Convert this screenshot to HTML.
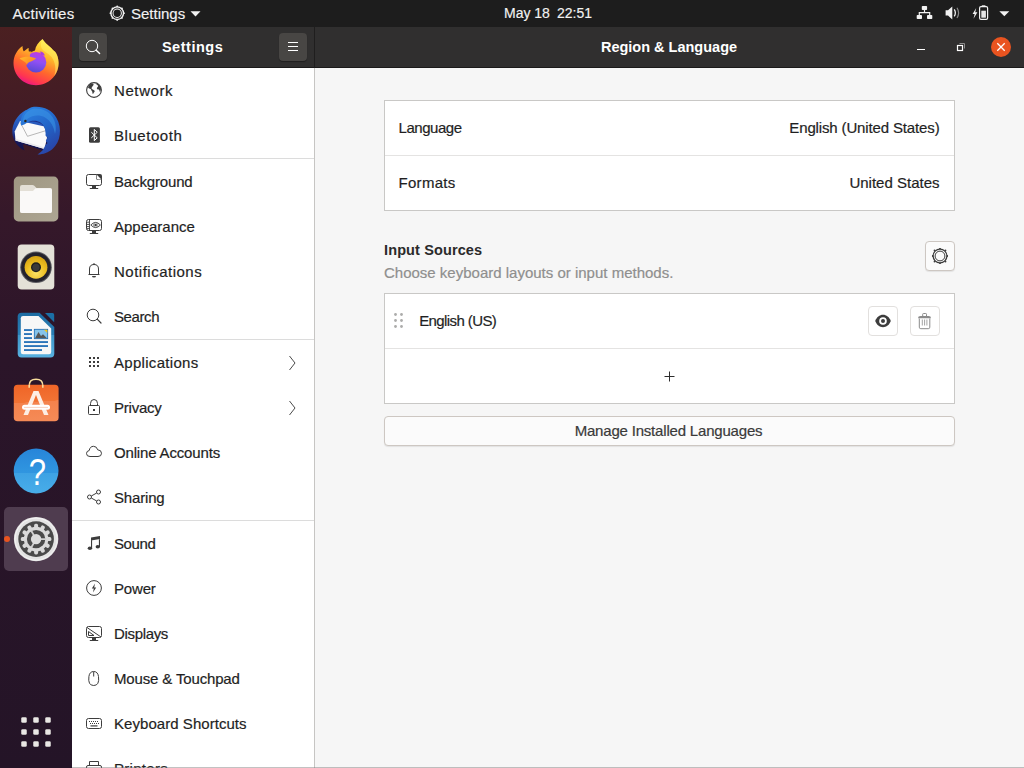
<!DOCTYPE html>
<html lang="en">
<head>
<meta charset="utf-8">
<title>Settings — Region &amp; Language</title>
<style>
*{box-sizing:border-box;margin:0;padding:0}
html,body{width:1024px;height:768px;overflow:hidden;background:#2c1424;font-family:"Liberation Sans",sans-serif;color:#2d2d2d}
.abs{position:absolute}
#topbar{position:absolute;left:0;top:0;width:1024px;height:27px;background:#1d1d1d;color:#f2f2f2;font-size:15px}
#topbar span{position:absolute;top:0;-webkit-text-stroke:0.15px;line-height:27px;white-space:nowrap}
#dock{position:absolute;left:0;top:27px;width:72px;height:741px;background:linear-gradient(180deg,#4b2021 0px,#431c25 80px,#35182a 190px,#2b1529 330px,#241427 741px)}
#hdrL{position:absolute;left:72px;top:27px;width:242px;height:41px;background:#302f2f;border-bottom:1px solid #1b1a1a}
#hdrR{position:absolute;left:314px;top:27px;width:710px;height:41px;background:#302f2f;border-bottom:1px solid #1b1a1a;border-left:1px solid #1f1e1e}
.htitle{position:absolute;top:0;line-height:40px;color:#fff;font-weight:bold;font-size:14.5px;white-space:nowrap;text-align:center}
.hbtn{position:absolute;top:6px;width:28px;height:28px;background:#484644;border-radius:4px;box-shadow:0 1px 1px rgba(0,0,0,.35)}
#side{position:absolute;left:72px;top:68px;width:242px;height:700px;background:#fff;overflow:hidden}
#sideborder{position:absolute;left:314px;top:68px;width:1px;height:700px;background:#c6c5c3}
#main{position:absolute;left:315px;top:68px;width:709px;height:700px;background:#f6f6f6}
.row{position:absolute;left:0;width:242px;height:45px}
.row .lbl{position:absolute;left:42px;-webkit-text-stroke:0.2px;top:0;line-height:45px;font-size:15px;color:#1f1f1f;white-space:nowrap}
.row svg.ic{position:absolute;left:14px;top:14px;width:16px;height:16px;overflow:visible}
.row svg.chev{position:absolute;left:214px;top:13.500px;width:12px;height:18px}
.sep{position:absolute;left:0;width:242px;height:1px;background:#dcdcdc}
.card{position:absolute;background:#fff;border:1px solid #c9c8c6}
.card .line{position:absolute;left:0;right:0;height:1px;background:#e4e3e2}
.t{position:absolute;-webkit-text-stroke:0.2px;white-space:nowrap;font-size:15px;color:#1f1f1f;line-height:20px}
.btn{position:absolute;background:#fbfbfb;border:1px solid #cdc7c2;border-radius:4px;box-shadow:0 1px 1px rgba(0,0,0,.08)}
</style>
</head>
<body>
<div id="topbar">
  <span style="left:12.5px;letter-spacing:0.28px">Activities</span>
  <span style="left:131px">Settings</span>
  <svg class="abs" style="left:108.700px;top:4.700px" width="16.400" height="16.400" viewBox="0 0 18 18"><circle cx="9" cy="9" r="4.600" fill="none" stroke="#f2f2f2" stroke-width="1.100"/><circle cx="9" cy="9" r="6.900" fill="none" stroke="#f2f2f2" stroke-width="1.500"/><g fill="#f2f2f2"><circle cx="9" cy="1.600" r="1"/><circle cx="9" cy="16.400" r="1"/><circle cx="1.600" cy="9" r="1"/><circle cx="16.400" cy="9" r="1"/><circle cx="3.800" cy="3.800" r="1"/><circle cx="14.200" cy="3.800" r="1"/><circle cx="3.800" cy="14.200" r="1"/><circle cx="14.200" cy="14.200" r="1"/></g></svg>
  <svg class="abs" style="left:190px;top:11px" width="11" height="6" viewBox="0 0 11 6"><path d="M0.500 0.300 H10.500 L5.500 5.500 Z" fill="#f2f2f2"/></svg>
  <svg class="abs" style="left:916px;top:5px" width="17" height="15" viewBox="0 0 17 15"><g fill="#f2f2f2"><rect x="5.800" y="0.900" width="5.300" height="4.100" rx="0.800"/><rect x="0.700" y="10" width="5.300" height="4.100" rx="0.800"/><rect x="11" y="10" width="5.300" height="4.100" rx="0.800"/><path d="M7.900 5 H9.100 V7 H14.300 V10 H13.100 V8.200 H3.900 V10 H2.700 V7 H7.900 Z"/></g></svg>
  <svg class="abs" style="left:945px;top:6px" width="16" height="14" viewBox="0 0 16 14"><path d="M0.600 4.200 H3 L7.300 0.400 V13.400 L3 9.600 H0.600 Z" fill="#f2f2f2"/><path d="M9.300 3.400 Q11.400 6.900 9.300 10.400" fill="none" stroke="#f2f2f2" stroke-width="1.300"/><path d="M12 1.800 Q15.200 6.900 12 12" fill="none" stroke="#8a8a8a" stroke-width="1.200"/></svg>
  <svg class="abs" style="left:972px;top:5px" width="17" height="15" viewBox="0 0 17 15"><path d="M4.200 2.900 L0.600 8.900 H2.700 L1.500 13.800 L5.400 7.300 H3.200 Z" fill="#f2f2f2"/><rect x="7.600" y="1.700" width="8" height="12.600" rx="1.400" fill="none" stroke="#f2f2f2" stroke-width="1.200"/><rect x="9.800" y="0.300" width="3.600" height="1.400" fill="#f2f2f2"/><rect x="9.300" y="5.700" width="4.600" height="7" fill="#e6e6e6"/></svg>
  <svg class="abs" style="left:999px;top:11px" width="11" height="6" viewBox="0 0 11 6"><path d="M0.300 0.200 H10.300 L5.300 5.300 Z" fill="#f2f2f2"/></svg>
  <span style="left:504px;font-size:14px">May 18</span><span style="left:557px;font-size:14px">22:51</span>
</div>
<div id="dock">
  <!-- Firefox -->
  <svg class="abs" style="left:4px;top:3px" width="64" height="64" viewBox="0 0 64 64">
    <defs>
      <linearGradient id="ffb" gradientUnits="userSpaceOnUse" x1="43.3" y1="11.3" x2="23" y2="55.2"><stop offset="0" stop-color="#fff04a"/><stop offset="0.3" stop-color="#ffb82a"/><stop offset="0.6" stop-color="#ff6a2c"/><stop offset="0.85" stop-color="#ff3650"/><stop offset="1" stop-color="#e9128c"/></linearGradient>
      <linearGradient id="ffg" x1="0.6" y1="0" x2="0.35" y2="1"><stop offset="0" stop-color="#c03be0"/><stop offset="0.45" stop-color="#9050f4"/><stop offset="1" stop-color="#5648d2"/></linearGradient>
      <linearGradient id="ffh" x1="0" y1="0" x2="1" y2="0.4"><stop offset="0" stop-color="#ffbd2e"/><stop offset="1" stop-color="#ff8a1e"/></linearGradient>
    </defs>
    <path d="M38.5 9 C41 13.500 46 16 49 20 C52.500 22 54.600 27.500 54.600 33 C54.600 45.500 44.500 55.200 32 55.200 C19.500 55.200 9.500 45.500 9.500 33 C9.500 26 13 20 18.500 16 C18.500 18 19 20 19.700 21.500 C21.500 20 23 18.500 24.700 18 C24.500 20 24.700 22 25.500 23.500 C27 22 29 21 31 20.500 C31.500 16 34.500 12 38.500 9 Z" fill="url(#ffb)"/>
    <path d="M38.500 9 C41 13.500 46 16 49 20 C52.500 22 54.600 27.500 54.600 33 C54.600 38 53 42.500 50 46.500 C52.500 40 51.500 32 47.500 27 C44.500 23.500 39.500 21.500 37.500 18 C36.300 15 37 11.500 38.500 9 Z" fill="#fff36a" opacity="0.500"/>
    <circle cx="32" cy="32.3" r="10.3" fill="url(#ffg)"/>
    <path d="M35.500 21.600 C38 21.400 40.200 23 41 25.800 C39.600 24.800 38.200 24.600 37 25 C37.300 23.700 36.700 22.500 35.500 21.600 Z" fill="#a83de2"/>
    <path d="M19 21.500 L27.500 21.500 C26 23.500 25.500 25.500 26 27.500 L24 30 L23 35.500 L19 31 Z" fill="url(#ffb)"/>
    <path d="M15.500 28.500 C20 26.200 27 26 32.200 28.600 C29.500 31 25.500 31.500 22.800 34 C21 31.500 18 30 15.500 28.500 Z" fill="url(#ffh)"/>
  </svg>
  <!-- Thunderbird -->
  <svg class="abs" style="left:4px;top:71px" width="64" height="64" viewBox="0 0 64 64">
    <defs>
      <linearGradient id="tbb" x1="0.2" y1="0" x2="0.8" y2="1"><stop offset="0" stop-color="#2b7fe0"/><stop offset="0.5" stop-color="#2265c8"/><stop offset="1" stop-color="#2a3fa2"/></linearGradient>
      <linearGradient id="tbl" x1="0" y1="0" x2="0" y2="1"><stop offset="0" stop-color="#2f74d6"/><stop offset="0.45" stop-color="#2450b4"/><stop offset="0.72" stop-color="#17195f"/><stop offset="1" stop-color="#121248"/></linearGradient>
    </defs>
    <path d="M22 12 C13 17 8 25.500 8.300 34.500 C8.600 42 13 48.500 20.500 52.500 C19.500 50 19 48 19.500 46 L40 53 L45 40 L40 20 Z" fill="url(#tbl)"/>
    <path d="M16 23 L40.500 28.500 L43 40 L40.500 51 L11.500 42.400 L10.700 33.500 Z" fill="#fafafa"/>
    <path d="M11.500 42.400 L40.500 51 L41 49.500 L11.700 40.800 Z" fill="#e9e9ec"/>
    <path d="M16.300 24.500 L23.500 38.300 L41.300 32.800" fill="none" stroke="#8a8a8a" stroke-width="0.600"/>
    <path d="M23 24.500 C28 22.500 34 23.500 37.500 26 C39.500 27.500 40.500 29 41 31 L41.500 27 L36 21 L26 21 Z" fill="#1d2f86"/>
    <path d="M17 27.500 C15.600 19 20 12 27.500 9.300 C37 7.500 47.500 11 52.500 20 C58.500 30.500 56.500 44 48.500 51 C44.500 54.500 38.500 56.700 33.500 56.500 C37.500 54 40 51 41.200 47.500 L43.500 45 L41.800 43 L43.500 39.500 L41.500 37.500 C42.300 32 40.500 27.500 36.500 24.500 C32.500 22 27.500 22.500 24.500 24 C22 25.500 19.500 27 17 27.500 Z" fill="url(#tbb)"/>
    <path d="M19 24 C19 17 23 12.500 28.500 11 C36 9.500 44 12.500 48.500 19 C52 24.500 52.500 31 51 36 C50 29 47 23 41 19.500 C35.500 16.500 28.500 17 24 20.500 C22 22 20.500 23.500 19 24 Z" fill="#3c97e8" opacity="0.550"/>
    <circle cx="21.400" cy="23" r="1.2" fill="#2a2418"/>
  </svg>
  <!-- Files -->
  <svg class="abs" style="left:4px;top:139px" width="64" height="64" viewBox="0 0 64 64">
    <defs><linearGradient id="flb" x1="0" y1="0" x2="1" y2="1"><stop offset="0" stop-color="#9f9782"/><stop offset="1" stop-color="#ada693"/></linearGradient></defs>
    <rect x="9.800" y="10.600" width="44.500" height="44.800" rx="4.500" fill="url(#flb)"/>
    <path d="M16 21 Q16 19 18 19 H28.500 Q29.500 19 30.300 19.800 L32.500 22 H46 Q48 22 48 24 V45 Q48 47 46 47 H18 Q16 47 16 45 Z" fill="#e3dfd6"/>
    <path d="M16 25 H29 L31.500 22.200 H46 Q48 22.200 48 24.200 V45 Q48 47 46 47 H18 Q16 47 16 45 Z" fill="#faf9f8"/>
  </svg>
  <!-- Rhythmbox -->
  <svg class="abs" style="left:4px;top:207px" width="64" height="64" viewBox="0 0 64 64">
    <defs><radialGradient id="rby" cx="0.5" cy="0.75" r="0.7"><stop offset="0" stop-color="#fbe266"/><stop offset="0.6" stop-color="#ecbe22"/><stop offset="1" stop-color="#d9a614"/></radialGradient></defs>
    <rect x="13.700" y="10.600" width="36.600" height="44.800" rx="4" fill="#e4e1d8"/>
    <circle cx="32" cy="33.300" r="15.800" fill="#5c5b60"/>
    <circle cx="32" cy="33.300" r="14.800" fill="#24222c"/>
    <circle cx="32" cy="33.300" r="11.400" fill="url(#rby)"/>
    <circle cx="32" cy="33.300" r="5" fill="#1f1f1f"/>
    <circle cx="32" cy="33.300" r="3.600" fill="#3a3a3a"/>
  </svg>
  <!-- Writer -->
  <svg class="abs" style="left:4px;top:275px" width="64" height="64" viewBox="0 0 64 64">
    <defs><linearGradient id="wrb" x1="0" y1="0" x2="0" y2="1"><stop offset="0" stop-color="#1c6ca2"/><stop offset="0.49" stop-color="#2a7fb6"/><stop offset="0.5" stop-color="#3d96c9"/><stop offset="1" stop-color="#58b1e0"/></linearGradient></defs>
    <path d="M17.500 10.700 H35.500 L50.300 25 V51.500 Q50.300 55.400 46.500 55.400 H17.500 Q13.700 55.400 13.700 51.500 V14.500 Q13.700 10.700 17.500 10.700 Z" fill="url(#wrb)"/>
    <path d="M41 11 H48.500 Q50.200 11 50.200 12.700 V20.200 Z" fill="#1b6fa5"/>
    <path d="M19 14 H34.500 L47.200 26.500 V50 Q47.200 52.300 45 52.300 H19 Q16.800 52.300 16.800 50 V16.200 Q16.800 14 19 14 Z" fill="#f7f7f7"/>
    <g fill="#1667b2"><rect x="20" y="27.200" width="8" height="1.700"/><rect x="20" y="31.200" width="8" height="1.700"/><rect x="20" y="35.200" width="8" height="1.700"/><rect x="20" y="39.200" width="24" height="1.700"/><rect x="20" y="43.200" width="24" height="1.700"/><rect x="20" y="47.200" width="18" height="1.700"/></g>
    <rect x="30.300" y="27.300" width="13.400" height="9.400" fill="#86c3ea" stroke="#1667b2" stroke-width="0.8"/>
    <path d="M31 36.300 L34.500 30 L37 34 L39 32.300 L43 36.300 Z" fill="#555"/>
    <path d="M40 27.700 H43.300 V31 Z" fill="#f5c211"/>
  </svg>
  <!-- Software -->
  <svg class="abs" style="left:4px;top:343px" width="64" height="64" viewBox="0 0 64 64">
    <defs><linearGradient id="swb" x1="0" y1="0" x2="0.08" y2="1"><stop offset="0" stop-color="#ef6426"/><stop offset="0.5" stop-color="#f27334"/><stop offset="0.505" stop-color="#f4824c"/><stop offset="1" stop-color="#f58a56"/></linearGradient></defs>
    <path d="M25.200 17.500 V15.500 Q25.200 9.300 32 9.300 Q38.800 9.300 38.800 15.500 V17.500" fill="none" stroke="#f8dd9c" stroke-width="1.600"/>
    <rect x="9.800" y="14.800" width="44.800" height="36.500" rx="3.800" fill="url(#swb)"/>
    <path d="M25.200 17.700 V15 M38.800 17.700 V15" stroke="#f8dd9c" stroke-width="1.600"/>
    <path d="M29.500 21 H34.500 L44.500 45 H40 L32 25 L24 45 H19.500 Z" fill="#fdeee4"/>
    <rect x="18" y="34.800" width="28" height="5" rx="2.500" fill="#fff"/>
    <rect x="20" y="36.900" width="24" height="0.900" fill="#f9cdb8"/>
  </svg>
  <!-- Help -->
  <svg class="abs" style="left:4px;top:411px" width="64" height="64" viewBox="0 0 64 64">
    <defs><linearGradient id="hpb" x1="0" y1="0" x2="0" y2="1"><stop offset="0" stop-color="#2785d9"/><stop offset="0.54" stop-color="#3096e0"/><stop offset="0.545" stop-color="#3ea2e4"/><stop offset="1" stop-color="#48ade9"/></linearGradient></defs>
    <circle cx="32.100" cy="33" r="22.400" fill="url(#hpb)"/>
    <text x="0" y="46.800" transform="translate(33.400 0) scale(0.840 1)" font-family="Liberation Sans, sans-serif" font-size="37" fill="#fff" text-anchor="middle">?</text>
  </svg>
  <!-- Settings (active) -->
  <div class="abs" style="left:4px;top:480px;width:64px;height:64px;border-radius:5px;background:#4f3c4f"></div>
  <div class="abs" style="left:4px;top:509px;width:6px;height:6px;border-radius:3px;background:#e95420"></div>
  <svg class="abs" style="left:4px;top:480px" width="64" height="64" viewBox="0 0 64 64">
    <circle cx="32.100" cy="32.100" r="22.200" fill="#e3e3e3"/>
    <circle cx="32.100" cy="32.100" r="21" fill="none" stroke="#f4f4f4" stroke-width="1"/>
    <circle cx="32.100" cy="32.100" r="17.800" fill="#4a4a4a"/>
    <g transform="translate(32.100 32.100)" fill="#d9d9d9">
      <circle r="12.300"/>
      <rect x="-2" y="-15.300" width="4" height="5" rx="1.600" transform="rotate(0)"/><rect x="-2" y="-15.300" width="4" height="5" rx="1.600" transform="rotate(30)"/><rect x="-2" y="-15.300" width="4" height="5" rx="1.600" transform="rotate(60)"/><rect x="-2" y="-15.300" width="4" height="5" rx="1.600" transform="rotate(90)"/><rect x="-2" y="-15.300" width="4" height="5" rx="1.600" transform="rotate(120)"/><rect x="-2" y="-15.300" width="4" height="5" rx="1.600" transform="rotate(150)"/><rect x="-2" y="-15.300" width="4" height="5" rx="1.600" transform="rotate(180)"/><rect x="-2" y="-15.300" width="4" height="5" rx="1.600" transform="rotate(210)"/><rect x="-2" y="-15.300" width="4" height="5" rx="1.600" transform="rotate(240)"/><rect x="-2" y="-15.300" width="4" height="5" rx="1.600" transform="rotate(270)"/><rect x="-2" y="-15.300" width="4" height="5" rx="1.600" transform="rotate(300)"/><rect x="-2" y="-15.300" width="4" height="5" rx="1.600" transform="rotate(330)"/>
      <circle r="9.200" fill="#4a4a4a"/>
      <path d="M0 0 L10 0 M0 0 L-5 -8.660 M0 0 L-5 8.660" stroke="#d0d0d0" stroke-width="1.800"/>
      <circle r="5.200" fill="#dcdcdc"/>
    </g>
  </svg>
  <!-- App grid -->
  <svg class="abs" style="left:20px;top:689px" width="32" height="32" viewBox="0 0 32 32"><g fill="#e9e7e4"><rect x="1.250" y="1.250" width="5.500" height="5.500" rx="1.300"/><rect x="13.250" y="1.250" width="5.500" height="5.500" rx="1.300"/><rect x="25.250" y="1.250" width="5.500" height="5.500" rx="1.300"/><rect x="1.250" y="13.250" width="5.500" height="5.500" rx="1.300"/><rect x="13.250" y="13.250" width="5.500" height="5.500" rx="1.300"/><rect x="25.250" y="13.250" width="5.500" height="5.500" rx="1.300"/><rect x="1.250" y="25.250" width="5.500" height="5.500" rx="1.300"/><rect x="13.250" y="25.250" width="5.500" height="5.500" rx="1.300"/><rect x="25.250" y="25.250" width="5.500" height="5.500" rx="1.300"/></g></svg>
</div>
<div id="hdrL">
  <div class="hbtn" style="left:7px"><svg class="abs" style="left:6px;top:6px" width="16" height="16" viewBox="0 0 16 16"><circle cx="7" cy="7" r="5.700" fill="none" stroke="#fff" stroke-width="1"/><path d="M11.200 11.200 L14.600 14.600" stroke="#fff" stroke-width="1.400" stroke-linecap="round"/></svg></div>
  <div class="htitle" style="left:70.600px;width:100px;letter-spacing:0.52px">Settings</div>
  <div class="hbtn" style="left:207px"><div class="abs" style="left:9px;top:9px;width:10px;height:1px;background:#fff"></div><div class="abs" style="left:9px;top:13px;width:10px;height:1px;background:#fff"></div><div class="abs" style="left:9px;top:17px;width:10px;height:1px;background:#fff"></div></div>
</div>
<div id="hdrR">
  <div class="htitle" style="left:254px;width:200px">Region &amp; Language</div>
  <div class="abs" style="left:602px;top:22px;width:8px;height:1px;background:#fff"></div>
  <svg class="abs" style="left:641px;top:15px" width="10" height="10" viewBox="0 0 10 10"><path d="M3.500 1.500 H8.500 V6.500" fill="none" stroke="#8c8c8c" stroke-width="1"/><rect x="1.500" y="3.500" width="5" height="5" fill="none" stroke="#fff" stroke-width="1.200"/></svg>
  <div class="abs" style="left:676px;top:10px;width:20px;height:20px;border-radius:10px;background:#e95420"><svg class="abs" style="left:5px;top:5px" width="10" height="10" viewBox="0 0 10 10"><path d="M1.300 1.300 L8.700 8.700 M8.700 1.300 L1.300 8.700" stroke="#fff" stroke-width="1.300"/></svg></div>

</div>
<div id="side">
  <div class="row" style="top:0px"><svg class="ic" viewBox="0 0 16 16"><circle cx="8" cy="8" r="7.4" fill="none" stroke="#3d3d3d" stroke-width="1.1"/><path d="M5.2 1.6 C3.6 2.6 2.4 3.8 2 5.4 C2.6 6.4 3.6 6.6 4.6 7 C5.4 7.4 5.2 8.6 6 9.2 C6.6 9.8 6.2 11 6.8 12 C7.4 11.8 7.6 10.6 8.4 10 C9 9.4 8.6 8.6 8 8.2 C7 7.6 6.2 7.4 5.6 6.6 C5.2 6 6.2 5.4 6.4 4.6 C6.6 3.8 7.8 3.6 7.6 2.6 C7.4 1.8 6.2 1.4 5.2 1.6 Z M10.6 1.4 C10.2 2.2 10.8 3 11.6 3.2 C12.2 3.4 12.4 4.2 11.8 4.8 C11.2 5.4 10.6 6 11 6.8 C11.6 7.6 12.6 7.2 13.2 8 C13.6 8.6 13.4 9.6 14 10 C14.8 9 15.2 7 14.8 5.6 C14.2 3.6 12.6 2 10.6 1.4 Z" fill="#3d3d3d"/></svg><span class="lbl" style="letter-spacing:0.60px">Network</span></div>
  <div class="row" style="top:45px"><svg class="ic" viewBox="0 0 16 16"><rect x="3" y="0.200" width="10.900" height="15.600" rx="1.500" fill="#3d3d3d"/><path d="M5.300 5.200 L11.200 10.800 L8.300 13.700 V2.400 L11.200 5.300 L5.300 10.900" fill="none" stroke="#fff" stroke-width="1"/></svg><span class="lbl" style="letter-spacing:0.55px">Bluetooth</span></div>
  <div class="sep" style="top:90px"></div>
  <div class="row" style="top:91px"><svg class="ic" viewBox="0 0 16 16"><path d="M10.5 1.5 H2.5 Q0.5 1.5 0.5 3.5 V10.500 Q0.5 12.500 2.5 12.500 H13.5 Q15.5 12.500 15.5 10.500 V6.5" fill="none" stroke="#3d3d3d" stroke-width="1"/><path d="M10 1 H14 Q16 1 16 3 V7 H12 Q10 7 10 5 Z" fill="#3d3d3d"/><path d="M10.6 1.6 L15.4 6.4 H12 Q10.6 6.4 10.6 5 Z" fill="#fff"/><path d="M6 13 H10 V15 H12.200 V16 H3.800 V15 H6 Z" fill="#3d3d3d"/></svg><span class="lbl" style="letter-spacing:-0.15px">Background</span></div>
  <div class="row" style="top:136px"><svg class="ic" viewBox="0 0 16 16"><rect x="0.5" y="1.5" width="15" height="11" rx="2" fill="none" stroke="#3d3d3d" stroke-width="1"/><path d="M3.500 1.500 V12.500 M0.500 4.200 H3.500 M0.500 6.400 H3.500 M0.500 8.600 H3.500 M0.500 10.600 H3.500" stroke="#3d3d3d" stroke-width="0.900" fill="none"/><path d="M4.800 7 Q9.600 1.800 14.400 7 Q9.600 12.200 4.800 7 Z" fill="none" stroke="#3d3d3d" stroke-width="0.900"/><circle cx="9.600" cy="7" r="2.300" fill="none" stroke="#6a6a6a" stroke-width="0.600"/><circle cx="9.600" cy="7" r="1.300" fill="#3d3d3d"/><path d="M6 13 H10 V15 H12.200 V16 H3.800 V15 H6 Z" fill="#3d3d3d"/></svg><span class="lbl" style="letter-spacing:0.00px">Appearance</span></div>
  <div class="row" style="top:181px"><svg class="ic" viewBox="0 0 16 16"><path d="M3.5 11.5 V6 Q3.5 1.5 8 1.5 Q12.5 1.5 12.5 6 V11.5 Z" fill="none" stroke="#3d3d3d" stroke-width="1"/><path d="M2.5 11.5 H13.5" stroke="#3d3d3d" stroke-width="1"/><path d="M6 13 H10 Q10 14.6 8 14.6 Q6 14.6 6 13 Z" fill="#3d3d3d"/><rect x="7.3" y="0.3" width="1.4" height="1.6" fill="#3d3d3d"/></svg><span class="lbl" style="letter-spacing:0.50px">Notifications</span></div>
  <div class="row" style="top:226px"><svg class="ic" viewBox="0 0 16 16"><circle cx="7" cy="7" r="5.8" fill="none" stroke="#3d3d3d" stroke-width="1"/><path d="M11.2 11.2 L15 15" stroke="#3d3d3d" stroke-width="1.2" stroke-linecap="round"/></svg><span class="lbl" style="letter-spacing:-0.40px">Search</span></div>
  <div class="sep" style="top:271px"></div>
  <div class="row" style="top:272px"><svg class="ic" viewBox="0 0 16 16"><g fill="#3d3d3d"><rect x="3" y="3" width="2" height="2"/><rect x="7" y="3" width="2" height="2"/><rect x="11" y="3" width="2" height="2"/><rect x="3" y="7" width="2" height="2"/><rect x="7" y="7" width="2" height="2"/><rect x="11" y="7" width="2" height="2"/><rect x="3" y="11" width="2" height="2"/><rect x="7" y="11" width="2" height="2"/><rect x="11" y="11" width="2" height="2"/></g></svg><span class="lbl" style="letter-spacing:0.30px">Applications</span><svg class="chev" viewBox="0 0 12 18"><path d="M3.5 2 L9 9 L3.5 16" fill="none" stroke="#4a4a4a" stroke-width="1"/></svg></div>
  <div class="row" style="top:317px"><svg class="ic" viewBox="0 0 16 16"><rect x="2.5" y="6.5" width="11" height="9" rx="1" fill="none" stroke="#3d3d3d" stroke-width="1"/><path d="M4.5 6.5 V4.5 Q4.5 0.5 8 0.5 Q11.5 0.5 11.5 4.5 V6.5" fill="none" stroke="#3d3d3d" stroke-width="1"/><rect x="7" y="10" width="2" height="2" fill="#3d3d3d"/></svg><span class="lbl" style="letter-spacing:-0.23px">Privacy</span><svg class="chev" viewBox="0 0 12 18"><path d="M3.5 2 L9 9 L3.5 16" fill="none" stroke="#4a4a4a" stroke-width="1"/></svg></div>
  <div class="row" style="top:362px"><svg class="ic" viewBox="0 0 16 16"><path d="M4 12.500 Q0.500 12.500 0.500 9.500 Q0.500 7 3.200 6.500 Q4 2.300 7.500 2.300 Q10.800 2.300 11.700 5.800 Q15.500 6 15.500 9.300 Q15.500 12.500 12 12.500 Z" fill="none" stroke="#3d3d3d" stroke-width="1"/></svg><span class="lbl" style="letter-spacing:-0.16px">Online Accounts</span></div>
  <div class="row" style="top:407px"><svg class="ic" viewBox="0 0 16 16"><circle cx="12.5" cy="3" r="2" fill="none" stroke="#3d3d3d" stroke-width="1"/><circle cx="3.5" cy="8" r="2" fill="none" stroke="#3d3d3d" stroke-width="1"/><circle cx="12.5" cy="13" r="2" fill="none" stroke="#3d3d3d" stroke-width="1"/><path d="M5.3 7 L10.7 4 M5.3 9 L10.7 12" stroke="#3d3d3d" stroke-width="1"/></svg><span class="lbl" style="letter-spacing:-0.17px">Sharing</span></div>
  <div class="sep" style="top:452px"></div>
  <div class="row" style="top:453px"><svg class="ic" viewBox="0 0 16 16"><path d="M5 2.500 L14 1 V4 L5 5.500 Z M5 3 H6.100 V13.500 H5 Z M12.900 2 H14 V12 H12.900 Z" fill="#3d3d3d"/><ellipse cx="3.900" cy="13.300" rx="2.200" ry="1.800" fill="#3d3d3d"/><ellipse cx="11.800" cy="11.800" rx="2.200" ry="1.800" fill="#3d3d3d"/></svg><span class="lbl" style="letter-spacing:-0.40px">Sound</span></div>
  <div class="row" style="top:498px"><svg class="ic" viewBox="0 0 16 16"><circle cx="8" cy="8" r="7.4" fill="none" stroke="#3d3d3d" stroke-width="1"/><path d="M9 3.5 L5.8 8.6 H7.8 L7 12.5 L10.2 7.4 H8.2 Z" fill="#3d3d3d"/></svg><span class="lbl" style="letter-spacing:-0.18px">Power</span></div>
  <div class="row" style="top:543px"><svg class="ic" viewBox="0 0 16 16"><rect x="0.5" y="1.5" width="15" height="11" rx="2" fill="none" stroke="#3d3d3d" stroke-width="1"/><path d="M1 2.500 L15 12" stroke="#3d3d3d" stroke-width="1"/><path d="M2.500 6.500 L8 10.500 H2.500 Z" fill="none" stroke="#3d3d3d" stroke-width="1"/><path d="M6 13 H10 V15 H12.200 V16 H3.800 V15 H6 Z" fill="#3d3d3d"/></svg><span class="lbl" style="letter-spacing:-0.34px">Displays</span></div>
  <div class="row" style="top:588px"><svg class="ic" viewBox="0 0 16 16"><path d="M7.700 1.500 Q3.600 1.500 2.900 6.500 Q1.700 15.500 7.700 15.500 Q13.700 15.500 12.500 6.500 Q11.800 1.500 7.700 1.500 Z" fill="none" stroke="#3d3d3d" stroke-width="1"/><path d="M7.700 2 V6.500" stroke="#3d3d3d" stroke-width="1"/></svg><span class="lbl" style="letter-spacing:-0.15px">Mouse &amp; Touchpad</span></div>
  <div class="row" style="top:633px"><svg class="ic" viewBox="0 0 16 16"><rect x="0.5" y="3.5" width="15" height="10" rx="2" fill="none" stroke="#3d3d3d" stroke-width="1"/><g fill="#3d3d3d"><rect x="3" y="6" width="1" height="1"/><rect x="5" y="6" width="1" height="1"/><rect x="7" y="6" width="1" height="1"/><rect x="9" y="6" width="1" height="1"/><rect x="11" y="6" width="1" height="1"/><rect x="4" y="8" width="1" height="1"/><rect x="6" y="8" width="1" height="1"/><rect x="8" y="8" width="1" height="1"/><rect x="10" y="8" width="1" height="1"/><rect x="12" y="8" width="1" height="1"/><rect x="4.500" y="10.300" width="7" height="1.200"/></g></svg><span class="lbl" style="letter-spacing:0.05px">Keyboard Shortcuts</span></div>
  <div class="row" style="top:678px"><svg class="ic" viewBox="0 0 16 16"><path d="M3.5 5.5 V1.5 H12.5 V5.5" fill="none" stroke="#3d3d3d" stroke-width="1"/><rect x="0.5" y="5.5" width="15" height="7" rx="1.5" fill="none" stroke="#3d3d3d" stroke-width="1"/><rect x="3.5" y="9.5" width="9" height="5" fill="#fff" stroke="#3d3d3d" stroke-width="1"/></svg><span class="lbl" style="letter-spacing:0.30px">Printers</span></div>
</div>
<div id="sideborder"></div>
<div class="abs" style="left:72px;top:767px;width:952px;height:1px;background:rgba(120,120,120,.45);z-index:5"></div>
<div id="main">
  <div class="card" style="left:69px;top:32px;width:571px;height:111px">
    <div class="line" style="top:54px"></div>
    <span class="t" style="left:13.500px;top:17px;letter-spacing:-0.45px">Language</span>
    <span class="t" style="right:14.500px;top:17px;letter-spacing:-0.14px">English (United States)</span>
    <span class="t" style="left:13.500px;top:72px;letter-spacing:0.3px">Formats</span>
    <span class="t" style="right:14.500px;top:72px">United States</span>
  </div>
  <span class="t" style="left:69px;top:172px;font-weight:bold;font-size:14.5px;letter-spacing:0.12px;-webkit-text-stroke:0;color:#2a2a2a">Input Sources</span>
  <span class="t" style="left:69px;top:195px;color:#8f8f8e">Choose keyboard layouts or input methods.</span>
  <div class="btn" style="left:610px;top:173px;width:30px;height:30px">
    <svg class="abs" style="left:6px;top:6px" width="16" height="16" viewBox="0 0 16 16"><circle cx="8" cy="8" r="4.900" fill="none" stroke="#3d3d3d" stroke-width="1"/><circle cx="8" cy="8" r="6.900" fill="none" stroke="#3d3d3d" stroke-width="1.300"/><g fill="#3d3d3d"><circle cx="15.70" cy="8.00" r="0.95"/><circle cx="13.44" cy="13.44" r="0.95"/><circle cx="8.00" cy="15.70" r="0.95"/><circle cx="2.56" cy="13.44" r="0.95"/><circle cx="0.30" cy="8.00" r="0.95"/><circle cx="2.56" cy="2.56" r="0.95"/><circle cx="8.00" cy="0.30" r="0.95"/><circle cx="13.44" cy="2.56" r="0.95"/></g></svg>
  </div>
  <div class="card" style="left:69px;top:225px;width:571px;height:111px">
    <div class="line" style="top:54px"></div>
    <svg class="abs" style="left:8px;top:17px" width="14" height="24" viewBox="0 0 14 24"><g fill="#acacab"><circle cx="2.500" cy="3.500" r="1.400"/><circle cx="8.500" cy="3.500" r="1.400"/><circle cx="2.500" cy="9.500" r="1.400"/><circle cx="8.500" cy="9.500" r="1.400"/><circle cx="2.500" cy="15.500" r="1.400"/><circle cx="8.500" cy="15.500" r="1.400"/></g></svg>
    <span class="t" style="left:34.200px;top:16.500px;letter-spacing:-0.6px">English (US)</span>
    <div class="btn" style="left:483px;top:12px;width:30px;height:30px;background:#fff;border-color:#e2e0de;box-shadow:none">
      <svg class="abs" style="left:6.100px;top:5.800px" width="16" height="16" viewBox="0 0 16 16"><path d="M0.200 8 C1.600 4.200 4.600 1.800 8 1.800 C11.400 1.800 14.400 4.200 15.800 8 C14.400 11.800 11.400 14.200 8 14.200 C4.600 14.200 1.600 11.800 0.200 8 Z" fill="#3d3d3d"/><circle cx="8" cy="8" r="3.800" fill="#fff"/><circle cx="8" cy="8" r="2" fill="#3d3d3d"/></svg>
    </div>
    <div class="btn" style="left:525px;top:12px;width:30px;height:30px;background:#fff;border-color:#e2e0de;box-shadow:none">
      <svg class="abs" style="left:-1px;top:-1px" width="30" height="30" viewBox="0 0 30 30"><path d="M12.700 10 V8.300 Q12.700 7.500 13.500 7.500 H15.700 Q16.500 7.500 16.500 8.300 V10" fill="none" stroke="#8a8a8a" stroke-width="1"/><path d="M8 12.200 Q8 10 10.500 10 H18.700 Q21 10 21 12.200 Z" fill="#8a8a8a"/><path d="M9.300 12.500 V21.200 Q9.300 22.700 10.800 22.700 H18.300 Q19.800 22.700 19.800 21.200 V12.500" fill="none" stroke="#8a8a8a" stroke-width="1"/><path d="M12.300 13.500 V19.500 M14.600 13.500 V19.500 M16.900 13.500 V19.500" stroke="#8a8a8a" stroke-width="0.800"/></svg>
    </div>
    <svg class="abs" style="left:279px;top:77px" width="11" height="11" viewBox="0 0 11 11"><path d="M5.5 0.500 V10.500 M0.500 5.500 H10.500" stroke="#2d2d2d" stroke-width="1"/></svg>
  </div>
  <div class="btn" style="left:69px;top:348px;width:571px;height:30px"><span class="t" style="left:-2px;right:0;top:4px;text-align:center;letter-spacing:-0.19px;color:#3a3a3a">Manage Installed Languages</span></div>
</div>
</body>
</html>
